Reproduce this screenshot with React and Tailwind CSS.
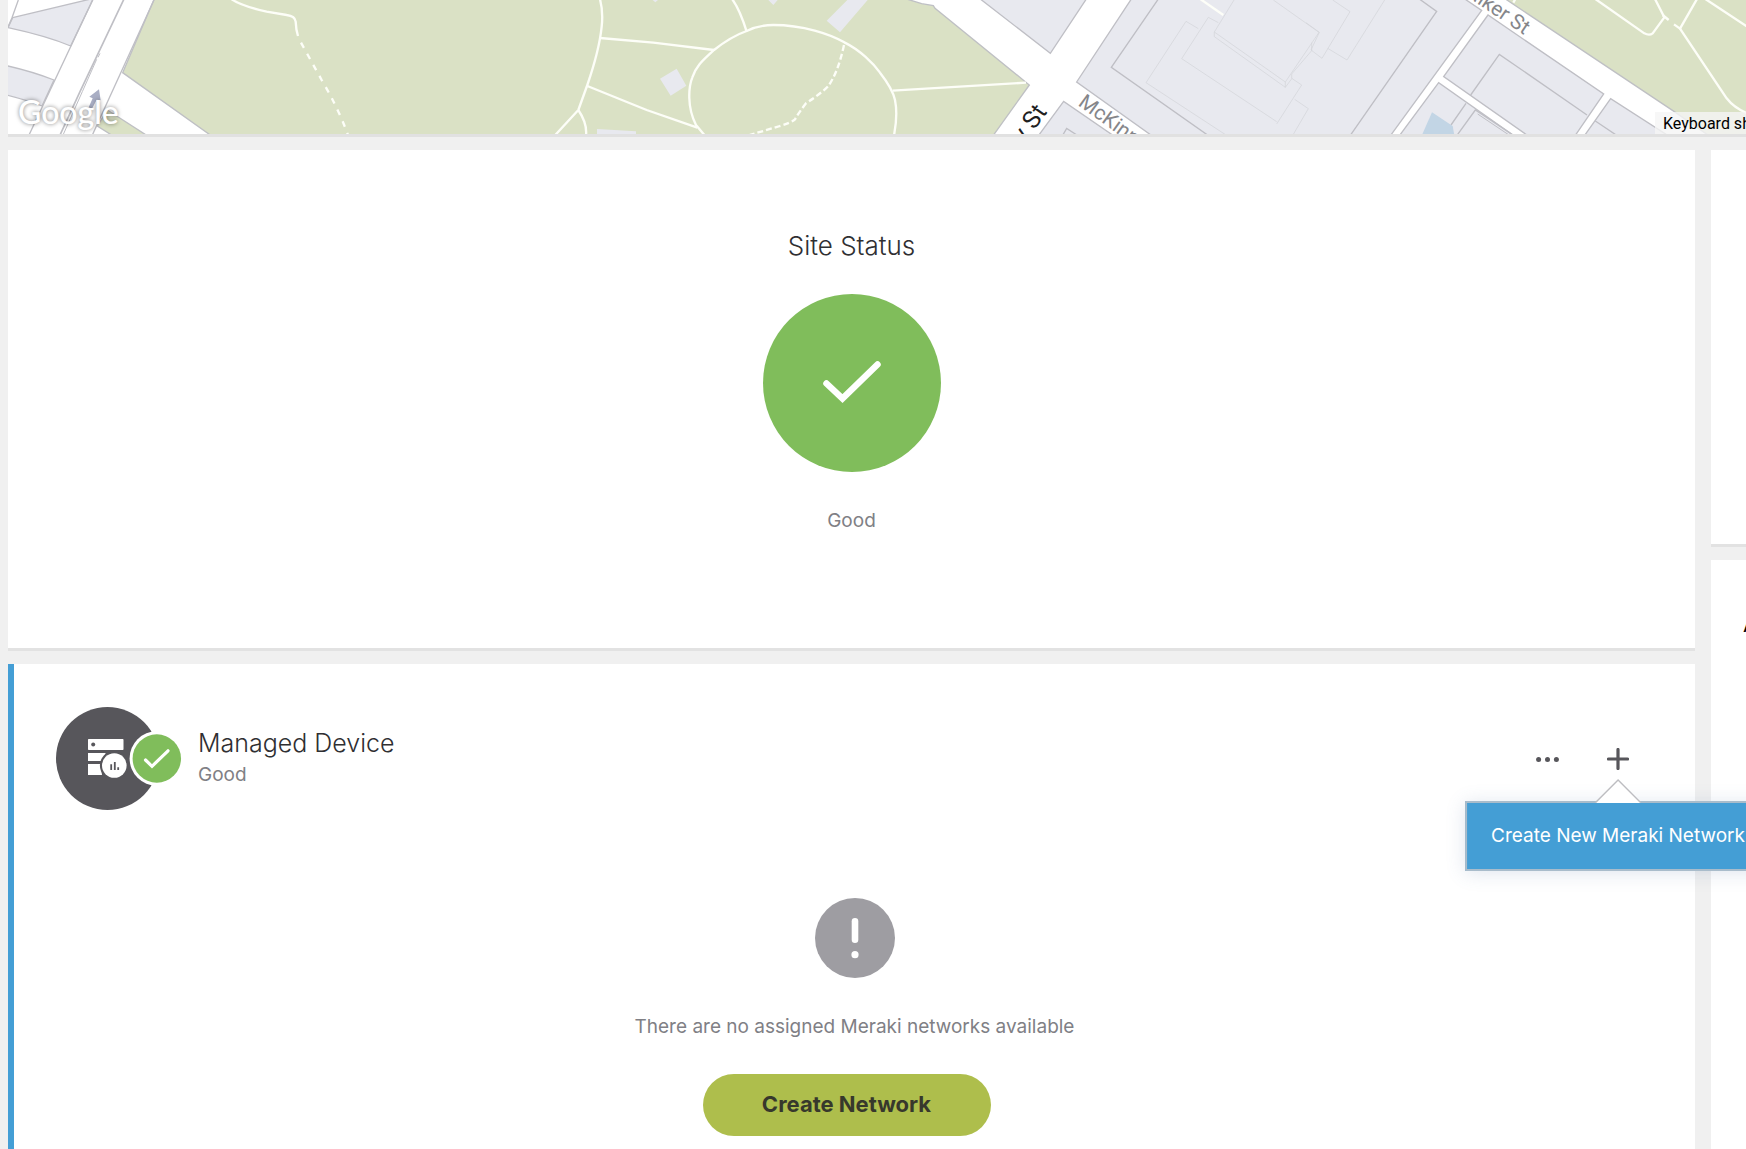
const park = { fill: '#dae1c5', stroke: '#bfc0c4', strokeWidth: 4 };
const block = { fill: '#e8e9ef', stroke: '#bfbfc5', strokeWidth: 4 };
const edge = { fill: 'none', stroke: '#bfbfc5', strokeWidth: 4 };
const trail = { fill: 'none', stroke: '#fdfef8', strokeWidth: 7, strokeLinejoin: 'round' };
const outline = { fill: 'none', stroke: '#d2d3d8', strokeWidth: 2 };

function CityMap() {
  return (
    <svg
      className="block h-full w-full"
      viewBox="0 0 5214 403"
      preserveAspectRatio="xMinYMin slice"
      role="img"
      aria-label="Map of the site"
    >
      <rect width="5214" height="403" fill="#ffffff" />

      <g transform="translate(-24 0)">
        <path {...park} d="M464 -6 L368 218 L632 406 L2980 406 L3088 255 L2805 25 L2800 17 L2765 11 L2710 -6Z" />
        <path {...block} d="M38 53 L285 -6 L278 0 L212 138 Q140 108 24 83Z" />
        <path {...edge} d="M55 0 L36 53 L20 90" />
        <path {...block} d="M16 196 Q100 215 162 240 L126 318 Q80 300 16 284Z" />
        <path {...edge} d="M278 0 L88 403 M462 0 L278 403" />
        <path {...edge} d="M372 -3 L240 275 L181 403" strokeWidth="5" />
        <path {...edge} d="M294 172 L300 160 M290 178 L247 275 L190 403" strokeWidth="3" />
        <path {...park} d="M322 330 L440 406 H336 L292 378Z" />
        <path d="M297 268 L268 290 L278 295 L266 322 L276 326 L290 299 L302 301Z" fill="#a9aec4" />
        <path {...trail} d="M695 -2 Q725 18 800 35 L860 45 Q885 48 887 65 Q888 90 894 108" />
        <path {...trail} d="M903 128 L965 240 Q1015 325 1044 405" strokeDasharray="18 20" />
      </g>

      <g transform="translate(1296 0)">
        <path fill="#e8e9ef" d="M660 236 L710 206 L739 257 L692 287Z M1222 0 L1283 0 L1200 97 L1160 62Z M471 387 L588 394 V405 H471Z M985 0 H1013 L1000 15Z M638 0 H654 L646 7Z" />
        <path {...trail} d="M480 -2 Q490 35 485 80 Q478 150 442 255 L415 330 L345 406" />
        <path {...trail} d="M415 330 Q442 370 438 406" />
        <path {...trail} d="M480 114 L640 128 L822 150" />
        <path {...trail} d="M442 258 L620 330 L772 383" />
        <path {...trail} d="M877 -2 Q900 30 920 95" />
        <path {...trail} d="M794 406 L768 375 C740 320 746 260 757 232 C770 195 790 180 822 150 C860 120 900 100 920 93 C950 78 970 75 1000 75 C1090 75 1170 102 1213 127 C1260 150 1300 190 1320 218 C1345 250 1360 275 1365 300 Q1374 345 1362 406" />
        <path {...trail} d="M1358 272 L1758 248" />
        <path {...trail} strokeDasharray="18 9" d="M1212 135 Q1195 215 1165 258 Q1150 275 1098 310 Q1075 340 1065 358 Q1050 370 1020 378 L926 406" />
      </g>

      <g transform="translate(2616 0)">
        <path {...block} d="M297 -6 L511 160 L621 -6Z" />
        <path {...block} d="M756 -6 L590 246 L814 406 H1532 L1805 31 L1750 -6Z" />
        <path {...block} d="M551 304 L476 406 H699Z" />
        <path {...edge} d="M548 406 L560 385 L592 406" />
        <path {...edge} d="M835 -3 L694 202 L984 406" />
        <path {...outline} d="M955 86 L918 64 L798 248 L1035 403" />
        <path {...outline} d="M1015 68 L985 52 L905 176 L1190 365" />
        <path {...outline} d="M1062 0 L1003 96 V110 L1216 262 V246 L1003 96" />
        <path {...outline} d="M1216 246 L1317 97 L1180 0 M1216 262 L1236 235" />
        <path {...outline} d="M1295 128 V152 L1235 222 V235 L1265 255 L1190 372 M1244 298 L1285 326 L1240 403" />
        <path {...trail} d="M962 -2 L1030 45" />
        <text
          x="592"
          y="314"
          transform="rotate(36 592 314)"
          fontFamily="Roboto, sans-serif"
          fontSize="62"
          fill="#85868a"
          stroke="#ffffff"
          strokeWidth="5"
          paintOrder="stroke"
        >
          McKinney Ave
        </text>
        <text
          x="503"
          y="336"
          transform="rotate(-54 503 336)"
          textAnchor="end"
          fontFamily="Roboto, sans-serif"
          fontSize="74"
          fill="#1f1f1f"
          stroke="#ffffff"
          strokeWidth="6"
          paintOrder="stroke"
        >
          y St
        </text>
      </g>

      <g transform="translate(3894 0)">
        <path {...outline} d="M0 68 L40 97 L15 150 L48 175 L132 35 L80 0 M65 145 L123 180 L236 0" />
        <path {...edge} d="M340 -3 L392 34 L133 406" />
        <path {...block} d="M546 45 L413 230 L664 406 H808 L893 282Z" />
        <path {...block} d="M398 248 L281 406 H622Z" />
        <path {...block} d="M914 296 L836 406 H1085Z" />
        <path {...edge} d="M494 285 L580 163 L843 345 M868 363 L932 406 M480 310 L435 375 M453 406 L508 330 L618 403" />
        <path {...edge} strokeWidth="3" d="M515 342 L606 403" />
        <path fill="#c2d5e5" d="M378 337 L440 378 L445 405 H348Z" />
        <path {...park} d="M594 -6 L1105 335 L1210 408 H1334 V-6Z" />
        <path {...trail} d="M628 -3 L622 8" />
        <path {...trail} d="M868 -3 L1015 100 Q1030 108 1040 100 L1075 52 L1047 -3" />
        <path {...trail} d="M1070 45 L1088 60 M1104 73 L1122 86 L1173 -3" />
        <path {...trail} d="M1122 86 L1262 295 Q1285 325 1325 340 M1198 -3 L1330 84" />
        <text
          x="654"
          y="105"
          transform="rotate(34 654 105)"
          textAnchor="end"
          fontFamily="Roboto, sans-serif"
          fontSize="62"
          fill="#85868a"
          stroke="#ffffff"
          strokeWidth="6"
          paintOrder="stroke"
        >
          Walker St
        </text>
      </g>
    </svg>
  );
}

function StatusCheck() {
  return (
    <svg className="size-[178px]" viewBox="0 0 178 178" role="img" aria-label="Good">
      <circle cx="89" cy="89" r="89" fill="#80bd5b" />
      <path d="M63.5 89.5 L79.5 104.5 L114.5 70.5" fill="none" stroke="#fff" strokeWidth="6.5" strokeLinecap="round" />
    </svg>
  );
}

function DeviceIcon() {
  return (
    <svg className="h-[104px] w-[126px] shrink-0" viewBox="0 0 126 104" aria-hidden="true">
      <circle cx="51.5" cy="51.5" r="51.5" fill="#57565b" />
      <path d="M32 46 H50 L45 54 H32Z M32 57 H44.5 L46 68 H32Z" fill="#fff" />
      <circle cx="58.3" cy="58.5" r="14.4" fill="#57565b" />
      <rect x="32" y="32" width="35.5" height="11" rx="0.7" fill="#fff" />
      <circle cx="37.2" cy="37.6" r="2" fill="#57565b" />
      <circle cx="58.3" cy="58.5" r="12.3" fill="#fff" />
      <path d="M55.2 63 V57.3 M58.8 63 V55 M62.2 63 V60.2" stroke="#57565b" strokeWidth="1.8" />
      <circle cx="100.8" cy="51.5" r="27.2" fill="#fff" />
      <circle cx="100.8" cy="51.5" r="24.2" fill="#80bd5b" />
      <path d="M89.5 53 L96 59.3 L112 43.8" fill="none" stroke="#fff" strokeWidth="3.2" strokeLinecap="round" />
    </svg>
  );
}

function AlertIcon() {
  return (
    <svg className="size-20" viewBox="0 0 80 80" aria-hidden="true">
      <circle cx="40" cy="40" r="40" fill="#9e9da2" />
      <path d="M40 23.3 V41.8" stroke="#fff" strokeWidth="6.6" strokeLinecap="round" />
      <circle cx="40" cy="56.7" r="3.6" fill="#fff" />
    </svg>
  );
}

function NetworkMenu() {
  return (
    <div className="absolute left-1/2 top-full z-10 -translate-x-1/2 pt-[26px]">
      <button
        type="button"
        className="h-[70px] whitespace-nowrap border-2 border-[#a9bccb] bg-[#449ed5] px-6 text-[19px] text-white shadow-[0_2px_18px_rgba(80,110,160,0.18)]"
      >
        Create New Meraki Network
      </button>
      <svg className="absolute left-1/2 top-1 h-6 w-[46px] -translate-x-1/2" viewBox="0 0 46 24" aria-hidden="true">
        <path d="M0.5 24 L23 1 L45.5 24Z" fill="#fff" />
        <path d="M0.5 23.5 L23 1 L45.5 23.5" fill="none" stroke="#bdbdc1" strokeWidth="1.4" />
      </svg>
    </div>
  );
}

const card = 'bg-white shadow-[0_3px_0_#e2e2e2]';

export default function App() {
  return (
    <div className="flex min-h-screen flex-col gap-4 overflow-hidden bg-[#f0f0f0] pl-2 font-['Inter','Liberation_Sans',sans-serif] text-[#2f2f32]">
      <section className="relative h-[134px] shadow-[0_3px_0_#e1e1e1]">
        <CityMap />
        <span className="absolute bottom-0.5 left-2.5 font-[Lato] text-[32px] font-medium leading-10 text-white [text-shadow:0_0_4px_rgba(0,0,0,0.5)]">
          Google
        </span>
        <button
          type="button"
          className="absolute bottom-0 right-0 h-[22px] w-[91px] overflow-hidden whitespace-nowrap bg-[#f5f5f5]/80 pl-2 text-left font-[Roboto] text-[16px] leading-6 text-black"
        >
          Keyboard shortcuts
        </button>
      </section>

      <div className="grid grow grid-cols-[minmax(0,1fr)_35px] gap-4">
        <main className="flex flex-col gap-4">
          <section className={`${card} flex flex-col items-center pb-[113px] pt-20`}>
            <h2 className="text-[26px] font-light leading-8">Site Status</h2>
            <div className="mt-8">
              <StatusCheck />
            </div>
            <p className="mt-[35px] text-[19px] leading-7 text-[#808085]">Good</p>
          </section>

          <section className={`${card} flex grow flex-col border-l-[6px] border-[#449ed5] pt-[43px]`}>
            <header className="flex items-center pl-[42px] pr-[61px]">
              <DeviceIcon />
              <div className="ml-4 flex grow flex-col gap-1 pb-1">
                <h2 className="text-[25px] font-light leading-8">Managed Device</h2>
                <p className="text-[19px] leading-6 text-[#808085]">Good</p>
              </div>
              <div className="flex gap-[39px]">
                <button type="button" aria-label="More actions" className="flex size-8 items-center justify-center">
                  <svg className="h-[5px] w-[23px]" viewBox="0 0 23 5" fill="#57565b" aria-hidden="true">
                    <circle cx="2.6" cy="2.5" r="2.5" />
                    <circle cx="11.5" cy="2.5" r="2.5" />
                    <circle cx="20.4" cy="2.5" r="2.5" />
                  </svg>
                </button>
                <div className="relative">
                  <button type="button" aria-label="Add" className="flex size-8 items-center justify-center">
                    <svg className="size-[22px]" viewBox="0 0 22 22" aria-hidden="true">
                      <path d="M11 1.5 V20.5 M1.5 11 H20.5" stroke="#57565b" strokeWidth="3.2" strokeLinecap="round" />
                    </svg>
                  </button>
                  <NetworkMenu />
                </div>
              </div>
            </header>

            <div className="mt-[87px] flex flex-col items-center">
              <AlertIcon />
              <p className="mt-[35px] text-[19px] leading-7 text-[#808085]">
                There are no assigned Meraki networks available
              </p>
              <button
                type="button"
                className="mr-4 mt-[33px] h-[62px] w-72 rounded-full bg-[#aebe4c] pb-0.5 text-[22px] font-bold text-[#37382c]"
              >
                Create Network
              </button>
            </div>
          </section>
        </main>

        <aside className="flex flex-col gap-4">
          <section className={`${card} h-[394px]`} />
          <section className={`${card} grow overflow-hidden pl-8 pt-12`}>
            <h2 className="text-[22px] leading-8 text-black">A</h2>
          </section>
        </aside>
      </div>
    </div>
  );
}
